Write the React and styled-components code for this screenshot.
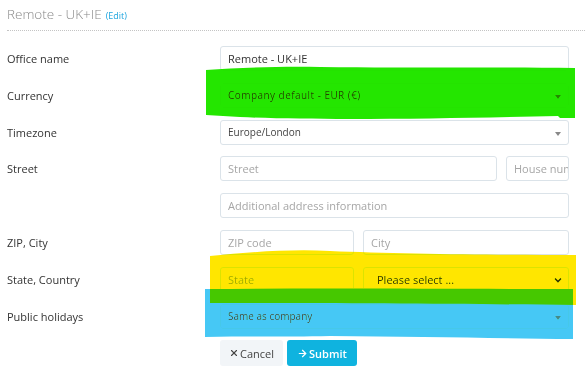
import React from "react";
import styled, { createGlobalStyle } from "styled-components";
import { X, ArrowRight } from "lucide-react";

const GlobalStyle = createGlobalStyle`
	html, body {
		margin: 0;
		padding: 0;
		background: #fff;
	}
	body {
		font-family: "Open Sans", "Noto Sans", sans-serif;
		color: #333;
	}
`;

const Page = styled.div`
	position: relative;
	width: 585px;
	height: 379px;
	overflow: hidden;
	padding-left: 7px;
	box-sizing: border-box;
`;

const Header = styled.div`
	display: flex;
	align-items: baseline;
	gap: 4px;
	height: 31px;
	padding-top: 5px;
	box-sizing: border-box;
	border-bottom: 1px dotted #c4c4c4;
	margin-bottom: 15px;
`;

const Title = styled.span`
	font-size: 13.5px;
	font-weight: 300;
	color: #8a8a8a;
`;

const EditLink = styled.a`
	font-size: 9px;
	color: #1fa6df;
	cursor: pointer;
`;

const Form = styled.div`
	display: grid;
	grid-template-columns: 213px 349px;
	row-gap: 11.75px;
`;

const Label = styled.div`
	height: 25px;
	display: flex;
	align-items: center;
	font-size: 11px;
	color: #333;
`;

const Field = styled.div`
	display: flex;
	flex-direction: column;
	gap: 12px;
`;

const Pair = styled.div`
	display: grid;
	grid-template-columns: ${(p) => p.cols};
	column-gap: 9px;
`;

const Box = styled.div`
	position: relative;
	height: 25px;
	box-sizing: border-box;
	border: 1px solid #dbe3e9;
	border-radius: 3px;
	background: #fff;
	display: flex;
	align-items: center;
	padding-left: ${(p) => p.indent || "7px"};
	font-size: ${(p) => p.size || "10px"};
	letter-spacing: ${(p) => p.spacing || "0"};
	color: ${(p) => (p.placeholder ? "#a6a6a6" : p.muted ? "#444" : "#333")};
	white-space: nowrap;
	overflow: hidden;
`;

const Caret = styled.span`
	position: absolute;
	right: 7px;
	top: 11px;
	width: 0;
	height: 0;
	border-left: 3px solid transparent;
	border-right: 3px solid transparent;
	border-top: 4px solid #888;
`;

const Chevron = styled.svg`
	position: absolute;
	right: 6px;
	top: 9px;
`;

const Buttons = styled.div`
	display: flex;
	gap: 4px;
`;

const Button = styled.button`
	height: 26px;
	border: none;
	border-radius: 3px;
	padding: 0 ${(p) => (p.primary ? "10px" : "9px")};
	display: flex;
	align-items: center;
	gap: 1px;
	font-family: "Open Sans", sans-serif;
	font-size: 11px;
	font-weight: ${(p) => (p.primary ? 600 : 400)};
	background: ${(p) => (p.primary ? "#0fb3df" : "#f2f5f8")};
	color: ${(p) => (p.primary ? "#fff" : "#444")};
	cursor: pointer;
`;

const Marker = styled.svg`
	position: absolute;
	left: 0;
	top: 0;
	pointer-events: none;
	mix-blend-mode: darken;
	path {
		mix-blend-mode: darken;
	}
`;

const Select = ({ children, spacing }) => (
	<Box muted spacing={spacing}>
		{children}
		<Caret />
	</Box>
);

export default function App() {
	return (
		<>
			<GlobalStyle />
			<Page>
				<Header>
					<Title>Remote - UK+IE</Title>
					<EditLink>(Edit)</EditLink>
				</Header>
				<Form>
					<Label>Office name</Label>
					<Box size="11px">Remote - UK+IE</Box>

					<Label>Currency</Label>
					<Select spacing="0.45px">Company default - EUR (€)</Select>

					<Label>Timezone</Label>
					<Select>Europe/London</Select>

					<Label>Street</Label>
					<Field>
						<Pair cols="277px 63px">
							<Box placeholder size="11px">Street</Box>
							<Box placeholder size="11px">House number</Box>
						</Pair>
						<Box placeholder size="11px">Additional address information</Box>
					</Field>

					<Label>ZIP, City</Label>
					<Pair cols="134px 206px">
						<Box placeholder size="11px">ZIP code</Box>
						<Box placeholder size="11px">City</Box>
					</Pair>

					<Label>State, Country</Label>
					<Pair cols="134px 206px">
						<Box placeholder size="11px">State</Box>
						<Box size="11px" indent="13px">
							Please select ...
							<Chevron width="8" height="6" viewBox="0 0 8 6">
								<path d="M1 1.5 L4 4.5 L7 1.5" fill="none" stroke="#333" strokeWidth="1.6" />
							</Chevron>
						</Box>
					</Pair>

					<Label>Public holidays</Label>
					<Select>Same as company</Select>

					<div />
					<Buttons>
						<Button>
							<X size={10} strokeWidth={2.6} />
							Cancel
						</Button>
						<Button primary>
							<ArrowRight size={11} strokeWidth={2.6} />
							Submit
						</Button>
					</Buttons>
				</Form>
				<Marker width="585" height="379" viewBox="0 0 585 379">
					<path
						fill="#24e600"
						d="M206 70 C240 68 280 66 320 67 C420 68 500 67 575 68 L575 118 L560 118 L558 116 C460 118 330 121 240 117 L206 115 Z"
					/>
					<path
						fill="#ffe600"
						d="M210 256 C250 252 290 249 330 251 C400 254 500 255 576 255 L576 305 C480 304 330 303 210 303 Z"
					/>
					<path
						fill="#46c8f5"
						d="M205 289 C330 288 460 289 573 289 L573 339 C500 338 420 337 330 336 C280 337 250 336 205 337 Z"
					/>
				</Marker>
			</Page>
		</>
	);
}
